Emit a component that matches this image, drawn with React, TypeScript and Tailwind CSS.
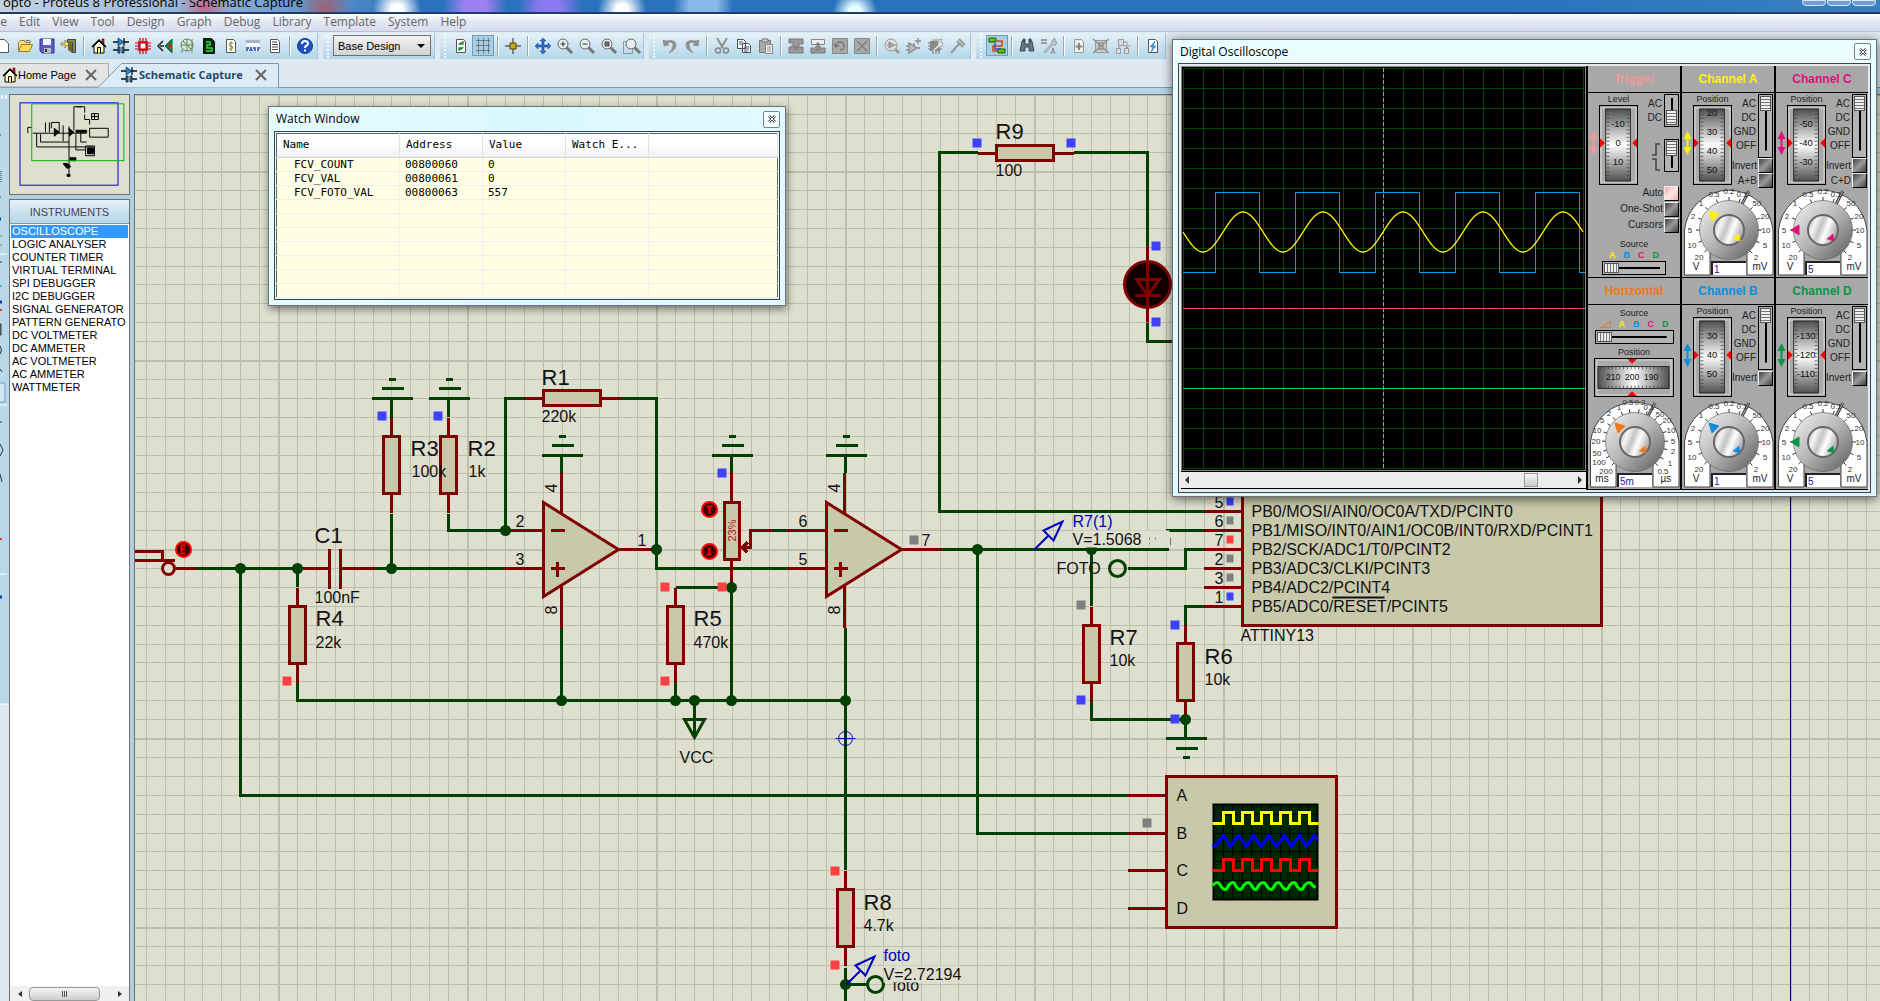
import { ReactNode } from 'react';
import clsx from 'clsx';

type Side = 'left' | 'up';

type DialLabel = [string, number, number];

type ChannelProps = {
    name: string;
    color: string;
    titleClass: string;
    position: [string, number][];
    volts: string;
    knob: Side;
    sum?: string;
};

const WIRE = '#004000';
const PART = '#800000';
const FILL = '#c8c8aa';
const BLUE = '#4040ff';
const RED = '#ff4040';
const GREY = '#808080';
const PROBE = '#0000c0';

const MENU = ['File', 'Edit', 'View', 'Tool', 'Design', 'Graph', 'Debug', 'Library', 'Template', 'System', 'Help'];

const INSTRUMENTS = [
    'OSCILLOSCOPE', 'LOGIC ANALYSER', 'COUNTER TIMER', 'VIRTUAL TERMINAL', 'SPI DEBUGGER', 'I2C DEBUGGER',
    'SIGNAL GENERATOR', 'PATTERN GENERATO', 'DC VOLTMETER', 'DC AMMETER', 'AC VOLTMETER', 'AC AMMETER', 'WATTMETER'
];

const WATCH_ROWS = [
    ['FCV_COUNT', '00800060', '0'],
    ['FCV_VAL', '00800061', '0'],
    ['FCV_FOTO_VAL', '00800063', '557'],
    [], [], [], [], [], [], []
];

const CHANNELS: Record<string, ChannelProps> = {
    A: { name: 'Channel A', color: '#fff200', titleClass: 'text-[#fff200]', position: [['20', 6], ['30', 26], ['40', 46], ['50', 66]], volts: '1', knob: 'up', sum: 'A+B' },
    B: { name: 'Channel B', color: '#0a8fe0', titleClass: 'text-[#0a8fe0]', position: [['30', 18], ['40', 38], ['50', 58]], volts: '1', knob: 'up' },
    C: { name: 'Channel C', color: '#e0107c', titleClass: 'text-[#e0107c]', position: [['-50', 18], ['-40', 38], ['-30', 58]], volts: '5', knob: 'left', sum: 'C+D' },
    D: { name: 'Channel D', color: '#0a9448', titleClass: 'text-[#0a9448]', position: [['-130', 18], ['-120', 38], ['-110', 58]], volts: '5', knob: 'left' }
};

const VOLT_LABELS: DialLabel[] = [
    ['0.5', 32, 9], ['0.2', 47, 6], ['0.1', 60, 9], ['1', 19, 18], ['2', 11, 31], ['5', 8, 45], ['10', 10, 60], ['20', 17, 72],
    ['50', 75, 18], ['20', 83, 31], ['10', 84, 45], ['5', 83, 60], ['2', 74, 72]
];

const TIME_LABELS: DialLabel[] = [
    ['0.5', 40, 5], ['0.2', 52, 5], ['1', 31, 10], ['2', 21, 16], ['5', 14, 23], ['10', 9, 33], ['20', 8, 44], ['50', 9, 56],
    ['100', 11, 65], ['200', 18, 74], ['0.1', 61, 10], ['50', 72, 17], ['20', 79, 23], ['10', 83, 33], ['5', 85, 44], ['2', 85, 54],
    ['1', 82, 66], ['0.5', 75, 74]
];

const lens = (
    <>
        <path d="M9 9l6 6" stroke="#777" strokeWidth="3" />
        <circle cx="6" cy="6" r="5" fill="#e8eef2" stroke="#666" />
    </>
);
const page = <path d="M3.5 1.5h7l2 2v11h-9z" fill="#fff" stroke="#555" />;
const greyPage = <path d="M3.5 1.5h7l2 2v11h-9z" fill="#eee" stroke="#999" />;

const ICONS: Record<string, ReactNode> = {
    new: <path d="M1.5 1.5h8l4 4v9h-12z" fill="#fff" stroke="#555" />,
    open: (
        <>
            <path d="M1.5 13.5v-9l2-2h4l1 2h4v2" fill="#f8e08a" stroke="#9a7a20" />
            <path d="M1.5 13.5l3-7h11l-3 7z" fill="#ffd95a" stroke="#9a7a20" />
            <path d="M9 3q3-2 5 1" fill="none" stroke="#555" />
        </>
    ),
    save: (
        <>
            <path d="M1 1h14v14H3l-2-2z" fill="#5a5ac8" stroke="#33337a" />
            <path d="M4 1h8v6H4z" fill="#f4f4ff" />
            <path d="M5 10h7v5H5z" fill="#bbb" />
            <path d="M6 11h2v3H6z" fill="#333" />
        </>
    ),
    exit: (
        <>
            <path d="M6.500 1.500h8v13h-3v-10h-5z" fill="#8a8a50" stroke="#444" />
            <path d="M7 3l4 3v9l-4-3z" fill="#6a6a38" />
            <path d="M0 5h4V2l4 4-4 4V7H0z" fill="#f4e838" stroke="#666" strokeWidth=".7" />
        </>
    ),
    home: (
        <>
            <path d="M11 1h2v5h-2z" fill="#f00" stroke="#000" strokeWidth=".5" />
            <path d="M3 8l5-5 5 5v7H3z" fill="#fffbd8" stroke="#000" />
            <path d="M1 9l7-7 7 7" fill="none" stroke="#000" strokeWidth="1.500" />
            <path d="M6.500 15V9.500h3V15" fill="#ffef60" stroke="#000" />
        </>
    ),
    schem: (
        <>
            <path d="M0 4h16M0 12h5m6 0h5M11 0v8" stroke="#111" strokeWidth="1.300" />
            <path d="M5 0l6 4-6 4z" fill="#1c86e0" stroke="#111" strokeWidth=".6" />
            <path d="M5 9h2v6H5zM9 9h2v6H9z" fill="#1c86e0" stroke="#111" strokeWidth=".8" />
        </>
    ),
    chip: (
        <>
            <path d="M5 0v16M8 0v16M11 0v16M0 5h16M0 8h16M0 11h16" stroke="#c00018" strokeWidth="1.200" />
            <path d="M3 3h10v10H3z" fill="#e81828" />
            <path d="M5 5h6v6H5z" fill="#fff" stroke="#900" />
        </>
    ),
    eye: (
        <>
            <path d="M15 1v14L8 8z" fill="#108040" stroke="#063" />
            <path d="M15 4v8l-4-4z" fill="#e02020" />
            <path d="M6 3L1 8l5 5M3 8h4" fill="none" stroke="#222" strokeWidth="1.500" />
        </>
    ),
    gerber: (
        <>
            <circle cx="8" cy="7" r="6" fill="#cfe6cf" stroke="#6a7a6a" />
            <path d="M2 7h12M8 1v12M4 3l8 8M13 1v14M3 12v3" stroke="#5a8a62" />
        </>
    ),
    layers: (
        <>
            <path d="M2.500 .5h8l3 3v12h-11z" fill="#082808" stroke="#111" />
            <path d="M5 4h4v3H6v3h5v3H5" fill="none" stroke="#28e048" strokeWidth="1.500" />
        </>
    ),
    bill: (
        <>
            {page}
            <path d="M10 5Q6 4 6 6.500T10 9q0 3-4 2M8 3v10" fill="none" stroke="#888820" />
        </>
    ),
    code: (
        <>
            <path d="M1 2h14v11H1z" fill="#fff" stroke="#ccc" strokeWidth=".5" />
            <path d="M1 2h14v3H1z" fill="#aab0cc" />
            <path d="M1 10h3m1 0h2m1 0h3m1 0h3M1 12h2m1 0h4m1 0h2m1 0h2" stroke="#2040c0" strokeWidth="1.500" />
        </>
    ),
    doc: (
        <>
            {page}
            <path d="M5 4h5M5 6.500h6M5 9h6M5 11.500h6" stroke="#444" />
        </>
    ),
    help: (
        <>
            <circle cx="8" cy="8" r="7.500" fill="#1c4fc0" stroke="#123a8c" />
            <path d="M5 6q0-3 3-3t3 2.500q0 1.500-2 2.500-1 .5-1 2M8 11.500v2" fill="none" stroke="#fff" strokeWidth="2" />
        </>
    ),
    redraw: (
        <>
            {page}
            <path d="M6 7q1-3 4-2M10 9q-1 3-4 2M10 3v3H7M6 13v-3h3" fill="none" stroke="#189030" strokeWidth="1.300" />
        </>
    ),
    dots: <path d="M1.500 2.500h14M1.500 7.500h14M1.500 12.500h14M3.500 .5v15M8.500 .5v15M13.500 .5v15" stroke="#333" strokeDasharray="1 1" />,
    origin: (
        <>
            <path d="M8 0v16M0 8h16" stroke="#222" />
            <path d="M5 5h6v6H5z" fill="#c8a818" stroke="#554400" />
        </>
    ),
    pan: <path d="M8 0l3 3H9v4h4V5l3 3-3 3V9H9v4h2l-3 3-3-3h2V9H3v2L0 8l3-3v2h4V3H5z" fill="#2f6fd0" stroke="#123a8c" strokeWidth=".5" />,
    zoomIn: <>{lens}<path d="M3.500 6h5M6 3.500v5" stroke="#333" /></>,
    zoomOut: <>{lens}<path d="M3.500 6h5" stroke="#333" /></>,
    zoomAll: <>{lens}<path d="M4 4h4v4H4z" fill="#777" stroke="#444" /></>,
    zoomArea: <><path d="M.5 3.500h9v12h-9z" fill="none" stroke="#555" strokeDasharray="1 1" /><g transform="translate(2 0)">{lens}</g></>,
    undo: <path d="M1 2l1 6 5-1-2-2q6-2 6 2t-4 8q8-4 7-9T4 3z" fill="#909090" stroke="#777" strokeWidth=".5" />,
    redo: <path d="M15 2l-1 6-5-1 2-2q-6-2-6 2t4 8q-8-4-7-9t10-3z" fill="#909090" stroke="#777" strokeWidth=".5" />,
    cut: (
        <>
            <path d="M3 0l6 10M13 0L7 10" stroke="#909090" strokeWidth="2" />
            <circle cx="4" cy="12.500" r="2.500" fill="none" stroke="#888" strokeWidth="1.500" />
            <circle cx="12" cy="12.500" r="2.500" fill="none" stroke="#888" strokeWidth="1.500" />
        </>
    ),
    copy: (
        <>
            <path d="M1.500 1.500h6l2 2v7h-8zM6.500 5.500h6l2 2v7h-8z" fill="#f4f8fa" stroke="#455260" />
            <path d="M3 4h4M3 6h3M8 9h5M8 11h5M8 13h4" stroke="#557" />
        </>
    ),
    paste: (
        <>
            <path d="M1.500 2.500h11v12h-11z" fill="#aaa" stroke="#777" />
            <path d="M4 1h6v3H4z" fill="#ccc" stroke="#777" />
            <path d="M7.500 6.500h7v9h-7z" fill="#eee" stroke="#888" />
            <path d="M9 9h4M9 11h4M9 13h4" stroke="#999" />
        </>
    ),
    blockCopy: <path d="M1 1h14v5h-4v3h4v6H1V9h3V7h2V5H1zM6 9h4l-2 3z" fill="#999" stroke="#777" />,
    blockMove: <><path d="M1.500 1.500h13v5h-13z" fill="#eee" stroke="#888" /><path d="M7 5h2v4h2l-3 3-3-3h2zM1 10h3l4 3 4-3h3v5H1z" fill="#999" stroke="#777" /></>,
    blockRotate: <><path d="M.5 .5h15v15H.5z" fill="#a8a8a8" stroke="#888" /><path d="M4 8a4 4 0 1 1 4 4M2 6l2 3 3-2" fill="none" stroke="#777" strokeWidth="1.500" /></>,
    blockDelete: <><path d="M.5 .5h15v15H.5z" fill="#a8a8a8" stroke="#888" /><path d="M3 3l10 10M13 3L3 13" stroke="#808080" strokeWidth="1.500" /></>,
    pick: <><path d="M9 9l6 6" stroke="#999" strokeWidth="3" /><circle cx="7" cy="7" r="6" fill="#ddd" stroke="#999" /><path d="M3 7h2m5 0h2M5 4l5 3-5 3z" fill="#aaa" stroke="#888" /></>,
    makeDev: <path d="M3 5l8 5-8 5zM0 8h3M0 12h3M11 10h3M12 0v6M9 3h6M8 8V5" fill="#bbb" stroke="#888" strokeWidth="1.300" />,
    packager: <><path d="M5 1v15M8 1v15M11 1v15M0 5h14M0 8h14M0 11h14" stroke="#777" /><path d="M2 3h10v10H2z" fill="#8a8a8a" /><path d="M4 13l6-6q-1-5 4-6l-1 3 2 1q0 4-4 4l-6 5z" fill="#e8e8e8" stroke="#888" strokeWidth=".6" /></>,
    decompose: <path d="M1 15l8-9M7 3l6 6M9 1l6 6" stroke="#999" strokeWidth="2.200" />,
    wire: (
        <>
            <path d="M8 3h5v5H4v5h5" fill="none" stroke="#e04010" strokeWidth="1.500" />
            <path d="M6 5v6h6" fill="none" stroke="#2060e0" strokeWidth="1.500" />
            <path d="M0 0h7v4H0zM9 11h7v4H9z" fill="#5cc018" stroke="#285808" />
        </>
    ),
    find: <path d="M3 3h3v3h4V3h3l2 10h-5V9H6v4H1zM4 1h2v2H4zM10 1h2v2h-2z" fill="#68747c" stroke="#2f3a42" strokeWidth=".8" />,
    props: <><path d="M0 2h6M0 5h6" stroke="#888" strokeWidth="1.300" /><path d="M3 14l8-9q-1-3 3-5v4h2q-1 4-4 3l-8 8z" fill="#ccc" stroke="#999" /><path d="M10 16l2-6 2 6M11 14h2" fill="none" stroke="#888" /></>,
    addSheet: <>{greyPage}<path d="M8 5v7M4.500 8.500h7" stroke="#888" strokeWidth="2" /></>,
    delSheet: <><path d="M2.500 2.500h11v12h-11z" fill="#ccc" stroke="#999" /><path d="M0 1l16 14M16 1L0 15M5 5h6M5 8h6M5 11h6" stroke="#909090" strokeWidth="1.300" /></>,
    zoomChild: <path d="M3.500 1.500h5v6h-5zM1.500 10.500h4v5h-4zM9.500 10.500h4v5h-4zM9 4h3v6M15 7l-3 3-3-3M4 8v2" fill="#ddd" stroke="#999" />,
    erc: <>{page}<path d="M10 3L5 9h3l-2 5 5-6H8z" fill="#38a0e8" stroke="#1068b0" strokeWidth=".5" /></>
};

const TOOL_GROUPS: string[][] = [
    ['redraw', 'dots*', '|', 'origin', '|', 'pan', 'zoomIn', 'zoomOut', 'zoomAll', 'zoomArea'],
    ['undo', 'redo', '|', 'cut', 'copy', 'paste', '|', 'blockCopy', 'blockMove', 'blockRotate', 'blockDelete', '|', 'pick', 'makeDev', 'packager', 'decompose'],
    ['wire*', '|', 'find', 'props', '|', 'addSheet', 'delSheet', 'zoomChild', '|', 'erc']
];

const Icon = ({ name }: { name: string }) => (
    <svg viewBox="0 0 16 16" className="size-4 shrink-0 overflow-visible" aria-hidden="true">{ICONS[name]}</svg>
);

const ToolItems = ({ items }: { items: string[] }) => (
    <>
        {items.map((item, i) => {
            if (item === '|') {
                return <span key={i} className="mx-[3px] h-5 w-[2px] border-l border-[#9aa6b0] bg-white" />;
            }
            const active = item.endsWith('*');
            const name = item.replace('*', '');
            return (
                <button
                    key={i}
                    type="button"
                    aria-label={name}
                    className={clsx('flex h-[21px] w-[22px] items-center justify-center border', active ? 'border-[#6a9fc0] bg-[#a9cde2]' : 'border-transparent')}
                >
                    <Icon name={name} />
                </button>
            );
        })}
    </>
);

const ToolGroup = ({ children, grip = true }: { children: ReactNode; grip?: boolean }) => (
    <div className="flex h-[26px] shrink-0 items-center border-r border-[#a3c6dc] bg-linear-to-b from-[#e6f1f8] to-[#b4d6e9] pr-px">
        {grip && <span className="mr-1 ml-1 h-6 border-l-2 border-dotted border-[#f4f8fb]" />}
        {children}
    </div>
);

const Header = () => (
    <header>
        <div className="flex h-3 items-start justify-between overflow-hidden bg-[#2a72be] bg-[radial-gradient(circle_at_205px_8px,#c06a8a_0,transparent_26px),radial-gradient(circle_at_325px_8px,#a06070_0,transparent_26px),radial-gradient(circle_at_397px_10px,#ffffff_6px,transparent_24px),radial-gradient(circle_at_475px_8px,#9a80f0_12px,transparent_32px),radial-gradient(circle_at_550px_8px,#8a78f0_12px,transparent_32px),radial-gradient(circle_at_622px_10px,#ffffff_6px,transparent_24px),radial-gradient(circle_at_703px_6px,#88b8e8_14px,transparent_30px),radial-gradient(circle_at_855px_12px,#e8ffff_6px,transparent_22px),linear-gradient(to_right,#c4d2e0_0,#8fb0d4_220px,transparent_420px,transparent_80%,#3a7fc0)] pl-[3px] text-black">
            <h1 className="-mt-2 text-[13px] leading-5 whitespace-nowrap">opto - Proteus 8 Professional - Schematic Capture</h1>
            <div className="flex h-[6px] gap-px pr-1">
                <button type="button" aria-label="Minimize" className="w-6 rounded-b border border-[#d8e8f8] bg-[#6f9fd0]" />
                <button type="button" aria-label="Maximize" className="w-6 rounded-b border border-[#d8e8f8] bg-[#6f9fd0]" />
                <button type="button" aria-label="Close program" className="w-6 rounded-b border border-[#d8e8f8] bg-[#6f9fd0]" />
            </div>
        </div>
        <nav className="h-5 border-t-2 border-b border-t-[#1d3c66] border-b-[#b9bdd6] bg-linear-to-b from-white via-[#e2e6f2] to-[#d8def0]">
            <div className="-ml-3 flex gap-3 text-xs leading-4 text-[#666]">
                {MENU.map((m) => <button key={m} type="button">{m}</button>)}
            </div>
        </nav>
        <div className="flex h-[27px] items-center gap-[5px] overflow-hidden bg-[#dfe9f1]">
            <div className="-ml-2">
                <ToolGroup grip={false}>
                    <ToolItems items={['new', 'open', 'save', 'exit', '|', 'home', 'schem', 'chip', 'eye', 'gerber', 'layers', 'bill', 'code', 'doc', '|', 'help']} />
                </ToolGroup>
            </div>
            <ToolGroup>
                <select
                    aria-label="Design variant"
                    className="mr-[2px] h-[21px] w-[98px] appearance-none border border-[#707070] bg-linear-to-b from-[#f3f3f3] to-[#d2d2d2] bg-no-repeat pl-1 font-['Liberation_Sans',Arial,sans-serif] text-[11px] leading-4 text-black"
                >
                    <option>Base Design</option>
                </select>
                <svg viewBox="0 0 8 4" className="pointer-events-none mr-2 -ml-4 h-1 w-2"><path d="M0 0h8L4 4z" fill="#000" /></svg>
            </ToolGroup>
            {TOOL_GROUPS.map((g, i) => <ToolGroup key={i}><ToolItems items={g} /></ToolGroup>)}
        </div>
        <div className="flex h-[29px] items-end border-b border-[#6f9fbd] bg-[#e1e9f0]">
            <div className="relative flex h-[24px] items-center gap-1 pl-[2px] text-xs">
                <svg className="absolute inset-0" width="290" height="25" viewBox="0 0 290 25" aria-hidden="true">
                    <path d="M0 .5H108.500V24H0" fill="#e4e4e4" stroke="#aaa" />
                    <path d="M98 24.500L121.500 .5H278.500V24.500" fill="#dcebf5" stroke="#6f9fbd" />
                </svg>
                <button type="button" className="relative flex w-[95px] items-center">
                    <Icon name="home" />
                    <span className="flex-1 text-left font-['Liberation_Sans',Arial,sans-serif] text-[11px] whitespace-nowrap">Home Page</span>
                    <svg viewBox="0 0 12 12" className="size-3"><path d="M1 1l10 10M11 1L1 11" stroke="#666" strokeWidth="2" /></svg>
                </button>
                <button type="button" className="relative ml-5 flex w-[146px] items-center gap-[2px] font-bold text-[#24486a]">
                    <Icon name="schem" />
                    <span className="flex-1 text-left text-[11px] whitespace-nowrap">Schematic Capture</span>
                    <svg viewBox="0 0 12 12" className="size-3"><path d="M1 1l10 10M11 1L1 11" stroke="#666" strokeWidth="2" /></svg>
                </button>
            </div>
        </div>
        <div className="h-[6px] bg-[#b3d5e8]" />
    </header>
);

const Overview = () => (
    <svg className="h-[101px] w-[121px] border border-[#707070] bg-[#dfdfcf]" viewBox="0 0 121 101" aria-label="Sheet overview">
        <rect x="10" y="8" width="100" height="84" fill="none" stroke="#0000c8" />
        <g fill="none" stroke="#000">
            <path d="M65 36V12h11v6m-8-6h5M76 20v5h5v5" />
            <path d="M27 39v14h58M31 40v8h29v-6M23 39h55M18 33v6m0-6h4M36 28v10M40 28v10M42 34v-6h8v10M54 31v16M60 32v4M67 40v16h10M72 38v10h6M60 48v34" />
            <path d="M45 34l5 4-5 4zM60 34l5 4-5 4z" fill="#000" />
            <path d="M81 34h19v9H81zM77 52h9v10h-9zM83 19h7v6h-7zM83 22h7M86 19v6" />
            <path d="M79 54h6v6h-6zM61 64h6v3h-6zM67 36h11v2H67zM54 70h4l4 3-4 2zM58 81h3v2h-3z" fill="#000" />
        </g>
        <rect x="22" y="9" width="94" height="58" fill="none" stroke="#00b800" />
    </svg>
);

const LeftStrip = () => (
    <svg className="w-[9px] shrink-0 bg-[#b9d8ea]" height="907" viewBox="0 0 9 907" aria-hidden="true">
        <path d="M0 610h9v297H0z" fill="#dde8f0" />
        <path d="M1 3h2M5 3h2" stroke="#fff" strokeWidth="3" />
        <path d="M0 160h7M0 311h7M0 480h7M0 610h7" stroke="#fff" />
        <path d="M0 41h1M0 103h1M0 168h2M0 328h2" stroke="#444" />
        <path d="M1 77v12" stroke="#333" strokeDasharray="1 1" />
        <path d="M0 125h1M0 208h2M0 503h2" stroke="#0044a0" strokeWidth="3" />
        <path d="M0 192h2" stroke="#088" />
        <path d="M0 142h2M0 151h2" stroke="#884" />
        <path d="M0 216h2M0 445h2" stroke="#e04010" strokeWidth="2" />
        <path d="M0 230h1v11h-1zM0 252q3 4 0 8M0 275l2 3M0 350l3 6-3 6M0 380l2 8" fill="none" stroke="#333" />
        <path d="M0 289h5v19H0" fill="#d4e8f3" stroke="#6a9fc0" />
    </svg>
);

const Sidebar = () => (
    <aside className="flex w-[134px] shrink-0 bg-[#b0d0e2]">
        <LeftStrip />
        <div className="flex w-[121px] flex-col gap-1">
            <Overview />
            <section className="flex min-h-0 flex-1 flex-col border border-b-0 border-[#707070] bg-white">
                <h2 className="h-6 border-b border-[#8a949c] bg-linear-to-b from-[#e6f1f8] to-[#b4d6e9] text-center text-[11px] leading-6 text-[#445]">INSTRUMENTS</h2>
                <ul className="flex-1 overflow-hidden px-px pt-px text-[11px] leading-[13px] text-black">
                    {INSTRUMENTS.map((name, i) => (
                        <li key={name}>
                            <button type="button" className={clsx('block w-full pl-px text-left whitespace-nowrap', i === 0 && 'bg-[#3399ff] text-white')}>{name}</button>
                        </li>
                    ))}
                </ul>
                <div className="flex h-[15px] items-center bg-[#f0f0f0]">
                    <button type="button" aria-label="Scroll left" className="flex w-[19px] justify-center"><svg viewBox="0 0 4 6" className="h-[6px] w-1"><path d="M4 0v6L0 3z" fill="#333" /></svg></button>
                    <div className="flex h-[14px] w-[71px] items-center justify-center gap-px rounded-sm border border-[#999] bg-linear-to-b from-[#f4f4f4] to-[#cfcfd2]">
                        {[0, 1, 2].map((n) => <span key={n} className="h-[6px] w-px bg-[#555]" />)}
                    </div>
                    <button type="button" aria-label="Scroll right" className="ml-auto flex w-[19px] justify-center"><svg viewBox="0 0 4 6" className="h-[6px] w-1"><path d="M0 0v6l4-3z" fill="#333" /></svg></button>
                </div>
            </section>
        </div>
    </aside>
);

// ---- schematic symbols, all in sheet pixels ----

const Node = ({ x, y }: { x: number; y: number }) => <circle cx={x} cy={y} r="5.500" fill={WIRE} />;

const State = ({ x, y, c }: { x: number; y: number; c: string }) => <rect x={x - 5} y={y - 5} width="9" height="9" fill={c} />;

const Label = ({ x, y, children, big, color }: { x: number; y: number; children: ReactNode; big?: boolean; color?: string }) => (
    <text x={x} y={y} fill={color || '#111'} className={big ? 'text-[22px]' : 'text-[16px]'}>{children}</text>
);

// y is the top of the body, the leads stick out by 19
const Resistor = ({ x, y }: { x: number; y: number }) => (
    <g stroke={PART} strokeWidth="3" shapeRendering="crispEdges">
        <path d={`M${x} ${y - 19}v95`} />
        <rect x={x - 8} y={y} width="16" height="57" fill={FILL} />
    </g>
);

const ResistorH = ({ x, y }: { x: number; y: number }) => (
    <g stroke={PART} strokeWidth="3" shapeRendering="crispEdges">
        <path d={`M${x - 19} ${y}h96`} />
        <rect x={x} y={y - 8} width="57" height="15" fill={FILL} />
    </g>
);

const Ground = ({ x, y, down }: { x: number; y: number; down?: boolean }) => {
    const d = down ? 1 : -1;
    return <path d={`M${x - 20} ${y}h41M${x - 10} ${y + 10 * d}h22M${x - 3} ${y + 19 * d}h7`} stroke={WIRE} strokeWidth="3" shapeRendering="crispEdges" />;
};

const OpAmp = ({ x }: { x: number }) => (
    <g stroke={PART} strokeWidth="3">
        <path d={`M${x + 18} 472v116M${x + 18} 580v47M${x - 40} 530h40M${x - 40} 568h40M${x + 75} 549h36`} shapeRendering="crispEdges" />
        <path d={`M${x} 502v94l75-47z`} fill={FILL} />
        <path d={`M${x + 7} 530h14M${x + 7} 568h14M${x + 14} 561v15`} shapeRendering="crispEdges" />
        <g stroke="none" fill="#111" className="text-[16px]">
            <text transform={`translate(${x + 13} 492) rotate(-90)`}>4</text>
            <text transform={`translate(${x + 13} 614) rotate(-90)`}>8</text>
        </g>
    </g>
);

const RoundButton = ({ x, y, d }: { x: number; y: number; d: string }) => (
    <g>
        <circle cx={x} cy={y} r="7.500" fill="#400000" stroke="#f00" strokeWidth="2" />
        <path transform={`translate(${x} ${y})`} d={d} fill="none" stroke="#f00" strokeWidth="2" />
    </g>
);

const Probe = ({ x, y }: { x: number; y: number }) => (
    <path d={`M${x} ${y}l14 -14M${x + 9} ${y - 19}l19 -9l-9 19z`} fill="none" stroke={PROBE} strokeWidth="2" />
);

const gridPath = (start: number, from: number, to: number, step: number, vertical: boolean) => {
    let d = '';
    for (let k = from; k <= to; k += step) {
        const p = Math.round(start + 18.9 * k);
        d += vertical ? `M${p} 90V1400` : `M130 ${p}H2800`;
    }
    return d;
};

const squareWave = (x: number, low: number, high: number) => {
    let d = `M${x} ${low}`;
    for (let i = 0; i < 5; i++) d += `h${i ? 9 : 11}V${high}h10V${low}`;
    return d + 'h9';
};

const PINS: [string, string, string][] = [
    ['5', 'PB0/MOSI/AIN0/OC0A/TXD/PCINT0', BLUE],
    ['6', 'PB1/MISO/INT0/AIN1/OC0B/INT0/RXD/PCINT1', GREY],
    ['7', 'PB2/SCK/ADC1/T0/PCINT2', RED],
    ['2', 'PB3/ADC3/CLKI/PCINT3', GREY],
    ['3', 'PB4/ADC2/PCINT4', GREY],
    ['1', 'PB5/ADC0/RESET/PCINT5', BLUE]
];

const Schematic = () => (
    <main className="min-w-0 flex-1 overflow-hidden border-t border-l border-[#707070] bg-[#dfdfcf]">
        <svg className="h-full w-full" aria-label="Schematic sheet">
            <g transform="translate(-134.500 -94.500)" fontFamily="Liberation Sans, Arial, sans-serif">
                <g stroke="#bebead" shapeRendering="crispEdges">
                    <path d={gridPath(278, -7, 130, 1, true)} />
                    <path d={gridPath(171, -4, 65, 1, false)} />
                    <path d={gridPath(278, 0, 130, 10, true)} strokeWidth="2" />
                    <path d={gridPath(171, 0, 65, 10, false)} strokeWidth="2" />
                </g>
                <path d="M1790 90V1400" stroke="#000060" shapeRendering="crispEdges" />

                <g fill="none" stroke={WIRE} strokeWidth="3" shapeRendering="crispEdges">
                    <path d="M195 568H303M374 568H503M240 568V795H1127" />
                    <path d="M297 568V586M297 682V700H845M391 398V419M391 513V568M448 398V416M448 513V530H505M524 398H505V530" />
                    <path d="M620 398H656V568H787M561 455V472M561 627V700M731 455V472M845 455V472M845 627V869M845 967V1400" />
                    <path d="M675 587H731V700M675 682V700M694 700V719M771 530H787M939 549H1168M977 549V833H1127" />
                    <path d="M977 152H939V511H1203M1073 152H1147V246M1147 322V341H1200" />
                    <path d="M1091 549V605M1091 701V719H1185V737M1165 530H1203M1203 549H1185V568H1127M1203 606H1185V624M845 984H866" />
                </g>

                <Ground x={391} y={398} />
                <Ground x={448} y={398} />
                <Ground x={561} y={455} />
                <Ground x={731} y={455} />
                <Ground x={845} y={455} />
                <Ground x={1185} y={738} down />

                <g fill="none" stroke={PART} strokeWidth="3" shapeRendering="crispEdges">
                    <path d="M134 551H162V560M134 560H174M175 568H195M303 568H329M341 568H374M329 548V588M340 548V588" />
                    <path d="M771 530H750V547H743M747 542L742 547L747 552" />
                    <path d="M941 549H903" />
                </g>
                <circle cx="168" cy="568" r="6" fill="#dfdfcf" stroke={PART} strokeWidth="3" />

                <Resistor x={391} y={436} />
                <Resistor x={448} y={436} />
                <Resistor x={297} y={606} />
                <Resistor x={675} y={606} />
                <Resistor x={1091} y={625} />
                <Resistor x={1185} y={643} />
                <Resistor x={845} y={889} />
                <ResistorH x={543} y={398} />
                <ResistorH x={996} y={153} />
                <g stroke={PART} strokeWidth="3" shapeRendering="crispEdges">
                    <path d="M731 472V587" />
                    <rect x="724" y="502" width="15" height="57" fill={FILL} />
                </g>
                <text transform="translate(735 541) rotate(-90)" fill="#c01010" className="text-[11px]">23%</text>

                <OpAmp x={543} />
                <OpAmp x={826} />

                <RoundButton x={183} y={549} d="M2 -4h-4v8h4M-2 0h3" />
                <RoundButton x={709} y={509} d="M0 4v-7M-3 -3h6" />
                <RoundButton x={709} y={551} d="M0 -4v7M-3 3h5" />

                <g stroke={PART} strokeWidth="3">
                    <path d="M1147 246V322" />
                    <circle cx="1147" cy="284" r="23" fill="#100000" />
                    <path d="M1147 261V307M1136 279H1159L1147 295ZM1135 295H1160" fill="none" />
                </g>

                {[[240, 568], [297, 568], [391, 568], [505, 530], [561, 700], [656, 549], [731, 587], [675, 700], [694, 700], [731, 700], [845, 700], [977, 549], [1091, 549], [1185, 719], [845, 984]].map(([x, y]) => (
                    <Node key={`${x}-${y}`} x={x} y={y} />
                ))}

                <path d="M694 700V736M684 719H704L694 737Z" fill="none" stroke={WIRE} strokeWidth="3" />
                <g fill="none" stroke={WIRE} strokeWidth="3">
                    <circle cx="1117" cy="568" r="8" />
                    <circle cx="875" cy="984" r="8" />
                </g>
                <g fill="none" stroke={PROBE}>
                    <circle cx="845" cy="738" r="7" />
                    <path d="M835 738H855M845 728V748" />
                </g>

                {[[382, 416], [438, 416], [722, 473], [977, 143], [1071, 143], [1156, 246], [1156, 322], [1081, 700], [1175, 625], [1175, 719]].map(([x, y]) => (
                    <State key={`${x}-${y}`} x={x} y={y} c={BLUE} />
                ))}
                {[[287, 681], [665, 587], [722, 587], [665, 681], [835, 871], [835, 965]].map(([x, y]) => (
                    <State key={`${x}-${y}`} x={x} y={y} c={RED} />
                ))}
                {[[914, 540], [1081, 605], [1147, 823]].map(([x, y]) => (
                    <State key={`${x}-${y}`} x={x} y={y} c={GREY} />
                ))}

                <Label x={541} y={384} big>R1</Label>
                <Label x={541} y={421}>220k</Label>
                <Label x={410} y={455} big>R3</Label>
                <Label x={411} y={476}>100k</Label>
                <Label x={467} y={455} big>R2</Label>
                <Label x={468} y={476}>1k</Label>
                <Label x={314} y={542} big>C1</Label>
                <Label x={314} y={602}>100nF</Label>
                <Label x={315} y={625} big>R4</Label>
                <Label x={315} y={647}>22k</Label>
                <Label x={693} y={625} big>R5</Label>
                <Label x={693} y={647}>470k</Label>
                <Label x={1109} y={644} big>R7</Label>
                <Label x={1109} y={665}>10k</Label>
                <Label x={1204} y={663} big>R6</Label>
                <Label x={1204} y={684}>10k</Label>
                <Label x={863} y={909} big>R8</Label>
                <Label x={863} y={930}>4.7k</Label>
                <Label x={995} y={138} big>R9</Label>
                <Label x={995} y={175}>100</Label>
                <Label x={679} y={762}>VCC</Label>
                <Label x={515} y={526}>2</Label>
                <Label x={515} y={564}>3</Label>
                <Label x={637} y={545}>1</Label>
                <Label x={798} y={526}>6</Label>
                <Label x={798} y={564}>5</Label>
                <Label x={921} y={545}>7</Label>
                <Label x={1056} y={573}>FOTO</Label>

                <Probe x={1034} y={549} />
                <Label x={1072} y={526} color={PROBE}>R7(1)</Label>
                <rect x="1072" y="530" width="97" height="17" fill="#dfdfcf" />
                <Label x={1072} y={544}>V=1.5068</Label>
                <path d="M1149 537v2M1149 542v2M1155 537v2M1170 537v8" stroke="#777" />

                <Label x={892} y={990}>foto</Label>
                <rect x="883" y="965" width="76" height="17" fill="#dfdfcf" />
                <Probe x={846} y={984} />
                <Label x={883} y={960} color={PROBE}>foto</Label>
                <Label x={883} y={979}>V=2.72194</Label>

                <rect x="1242" y="493" width="359" height="132" fill={FILL} stroke={PART} strokeWidth="3" />
                {PINS.map(([num, name, c], i) => {
                    const y = 511 + i * 19;
                    return (
                        <g key={num}>
                            <path d={`M1203 ${y}h39`} stroke={PART} strokeWidth="3" shapeRendering="crispEdges" />
                            <Label x={1214} y={y - 4}>{num}</Label>
                            <rect x="1226" y={y - 14} width="7" height="8" fill={c} />
                            <Label x={1251} y={y + 5}>{name}</Label>
                        </g>
                    );
                })}
                <path d="M1332 597H1384" stroke="#111" strokeWidth="2" />
                <Label x={1240} y={640}>ATTINY13</Label>

                <rect x="1166" y="776" width="170" height="151" fill={FILL} stroke={PART} strokeWidth="3" />
                {['A', 'B', 'C', 'D'].map((n, i) => (
                    <g key={n}>
                        <path d={`M1127 ${[795, 833, 870, 908][i]}h39`} stroke={PART} strokeWidth="3" shapeRendering="crispEdges" />
                        <Label x={1176} y={[800, 838, 875, 913][i]}>{n}</Label>
                    </g>
                ))}
                <rect x="1213" y="804" width="104" height="95" fill="#002800" stroke="#000" strokeWidth="2" />
                <path d="M1223 804v95M1232 804v95M1242 804v95M1251 804v95M1261 804v95M1270 804v95M1280 804v95M1289 804v95M1299 804v95M1308 804v95M1213 814h104M1213 833h104M1213 851h104M1213 861h104M1213 880h104" stroke="#000" />
                <g fill="none" strokeWidth="3">
                    <path d={squareWave(1212, 823, 812)} stroke="#ff0" />
                    <path d="M1212 844l3 2l8-11l7 11l8-11l8 11l7-11l8 11l7-11l8 11l8-11l7 11l8-11l7 11l8-11l3 5" stroke="#00f" />
                    <path d={squareWave(1212, 870, 859)} stroke="#f00" />
                    <path d="M1212 885q5-6 8 0q5 8 8 0q5-6 7 0q5 8 8 0q5-6 8 0q4 8 7 0q5-6 8 0q5 8 8 0q4-6 7 0q5 8 8 0q5-6 7 0q5 8 8 0q5-6 8 0l3 2" stroke="#0f0" />
                </g>
            </g>
        </svg>
    </main>
);

const CloseButton = () => (
    <button type="button" aria-label="Close" className="flex size-[17px] items-center justify-center rounded-xs border border-[#7a8488] bg-[#effdff]">
        <svg viewBox="0 0 8 8" className="size-2"><path d="M1 1l6 6M7 1L1 7" stroke="#555" strokeWidth="2.500" /><path d="M1 1l6 6M7 1L1 7" stroke="#fff" /></svg>
    </button>
);

const WatchWindow = () => (
    <section className="absolute top-[106px] left-[268px] w-[518px] border border-[#6b7579] bg-linear-to-r from-[#e6fcff] via-[#dbf8ff] to-[#e2faff] px-[5px] pb-[5px] shadow-[1px_3px_8px_rgba(0,0,0,0.5)]">
        <div className="flex h-[24px] items-center justify-between pl-[2px] text-xs text-black">
            <h2>Watch Window</h2>
            <CloseButton />
        </div>
        <div className="border border-[#3d4448] p-px">
            <table className="w-full table-fixed border-collapse border border-[#666] bg-[#ffffe3] text-left font-['DejaVu_Sans_Mono',monospace] text-[11px] text-black">
                <colgroup>
                    <col className="w-[123px]" />
                    <col className="w-[83px]" />
                    <col className="w-[83px]" />
                    <col className="w-[83px]" />
                    <col />
                </colgroup>
                <thead>
                    <tr className="h-6 border-b border-[#d0d0d8] bg-linear-to-b from-white from-45% to-[#eef0f3]">
                        {['Name', 'Address', 'Value', 'Watch E...', ''].map((h, i) => (
                            <th key={i} className="border-r border-[#e0e2e6] p-0 pl-[6px] font-normal whitespace-nowrap">{h}</th>
                        ))}
                    </tr>
                </thead>
                <tbody>
                    {WATCH_ROWS.map(([name, address, value], i) => (
                        <tr key={i} className="h-[14px] border-b border-[#eeeef4] leading-[13px]">
                            <td className="border-r border-[#eeeef4] p-0 pl-[17px]">{name}</td>
                            <td className="border-r border-[#eeeef4] p-0 pl-[5px]">{address}</td>
                            <td className="border-r border-[#eeeef4] p-0 pl-[5px]">{value}</td>
                            <td className="border-r border-[#eeeef4] p-0" />
                            <td className="p-0" />
                        </tr>
                    ))}
                </tbody>
            </table>
        </div>
    </section>
);

const sinePath = () => {
    let d = '';
    for (let x = 1; x <= 402; x += 2) {
        const y = 165 - 20 * Math.cos(((x - 61) * Math.PI) / 40);
        d += `${d ? 'L' : 'M'}${x} ${y.toFixed(1)}`;
    }
    return d;
};

const lines = Array.from({ length: 21 }, (_, i) => 1 + i * 20);

const Screen = () => (
    <svg className="block h-[405px] w-[405px] border border-[#888] bg-black" viewBox="0 0 403 403" aria-label="Oscilloscope traces">
        <g transform="translate(.5 .5)" fill="none" shapeRendering="crispEdges">
            <path d={lines.map((p) => `M${p} 1V401M1 ${p}H401`).join('')} stroke="#004800" />
            <path d="M201 0V402" stroke="#a0a0a0" strokeDasharray="4 2" />
            <path d="M0 241H402" stroke="#e84870" />
            <path d="M0 321H402" stroke="#00d850" />
            <path d="M0 205H33V125H77V205H113V125H157V205H193V125H237V205H273V125H317V205H353V125H397V205H402" stroke="#0a9cec" />
        </g>
        <path d={sinePath()} fill="none" stroke="#fff800" strokeWidth="1.300" />
    </svg>
);

const Wheel = ({ labels }: { labels: [string, number][] }) => (
    <svg className="block h-20 w-[39px] border border-black" viewBox="0 0 39 80" aria-hidden="true">
        <defs>
            <linearGradient id="wheelV" x1="0" x2="0" y1="0" y2="1">
                <stop offset="0" stopColor="#505050" />
                <stop offset=".5" stopColor="#fff" />
                <stop offset="1" stopColor="#505050" />
            </linearGradient>
        </defs>
        <rect x="1" y="1" width="37" height="78" fill="#aaa" stroke="#ddd" />
        <rect x="6" y="2" width="26" height="76" fill="url(#wheelV)" stroke="#222" />
        <path d={Array.from({ length: 18 }, (_, i) => `M7 ${4 + i * 4}h3M28 ${4 + i * 4}h3`).join('')} stroke="#444" strokeWidth=".8" />
        {labels.map(([t, y]) => <text key={t} x="19" y={y + 3} textAnchor="middle" className="text-[10px]" fill="#111">{t}</text>)}
        <path d="M0 33l5 5-5 5zM39 33l-5 5 5 5z" fill="#f00" />
    </svg>
);

const WheelH = () => (
    <svg className="mx-auto block h-[39px] w-20 border border-black" viewBox="0 0 80 39" aria-hidden="true">
        <defs>
            <linearGradient id="wheelH">
                <stop offset="0" stopColor="#505050" />
                <stop offset=".5" stopColor="#fff" />
                <stop offset="1" stopColor="#505050" />
            </linearGradient>
        </defs>
        <rect x="1" y="1" width="78" height="37" fill="#aaa" stroke="#ddd" />
        <rect x="2" y="8" width="75" height="23" fill="url(#wheelH)" stroke="#222" />
        <path d={Array.from({ length: 18 }, (_, i) => `M${5 + i * 4} 8v3M${5 + i * 4} 28v3`).join('')} stroke="#444" strokeWidth=".8" />
        <g className="text-[9px]" textAnchor="middle" fill="#111">
            <text x="18" y="22">210</text>
            <text x="38" y="22">200</text>
            <text x="58" y="22">190</text>
        </g>
        <path d="M33 0h10l-5 5zM33 39h10l-5-5z" fill="#f00" />
    </svg>
);

const MARKERS = {
    left: 'M15 45l8-5v10z',
    up: 'M27 26l10 3-7 7z'
};

const Dial = ({ label, labels, units, color, knob, value }: { label: string; labels: DialLabel[]; units: [string, string]; color: string; knob: Side; value: string }) => (
    <div className="relative mt-auto pb-px">
        <svg className="block h-[91px] w-full" viewBox="0 0 92 91" aria-hidden="true">
            <defs>
                <linearGradient id="knobOut" x1="0" y1="0" x2="1" y2="1">
                    <stop offset="0" stopColor="#f4f4f4" />
                    <stop offset=".5" stopColor="#b4b4b4" />
                    <stop offset="1" stopColor="#585858" />
                </linearGradient>
                <linearGradient id="knobIn" x1="0" y1="0" x2="1" y2=".4">
                    <stop offset="0" stopColor="#b0b0b0" />
                    <stop offset=".3" stopColor="#f4f4f4" />
                    <stop offset=".5" stopColor="#c4c4c4" />
                    <stop offset=".7" stopColor="#fff" />
                    <stop offset="1" stopColor="#b0b0b0" />
                </linearGradient>
            </defs>
            <path d="M2.500 90V45A44.500 44.500 0 0 1 91 45V90H65V66H28V90Z" fill="#fff" stroke="#444" />
            <path d="M67 6L59 21" stroke="#444" strokeWidth="3" />
            <path d="M67 6L59 21" stroke="#aaa" />
            {labels.map(([t, x, y], i) => {
                const a = Math.atan2(y - 45, x - 47);
                return (
                    <g key={i}>
                        <path d={`M${47 + 29 * Math.cos(a)} ${45 + 29 * Math.sin(a)}L${47 + 33 * Math.cos(a)} ${45 + 33 * Math.sin(a)}`} stroke="#333" />
                        <text x={x} y={y + 3} textAnchor="middle" fill="#333" className="text-[8px]">{t}</text>
                    </g>
                );
            })}
            <text x="14" y="85" textAnchor="middle" fill="#222" className="text-[10px]">{units[0]}</text>
            <text x="78" y="85" textAnchor="middle" fill="#222" className="text-[10px]">{units[1]}</text>
            <circle cx="47" cy="45" r="29.500" fill="url(#knobOut)" stroke="#666" strokeWidth=".7" />
            <circle cx="47" cy="45" r="15" fill="url(#knobIn)" stroke="#666" strokeWidth="2" />
            <path d={MARKERS[knob]} fill={color} stroke={color} strokeLinejoin="round" />
            <path d="M51 54l6-5 1 7z" fill={color} stroke={color} strokeLinejoin="round" strokeWidth=".6" />
        </svg>
        <input
            aria-label={label}
            defaultValue={value}
            className="absolute bottom-[2px] left-[29px] h-[14px] w-[35px] border-t-2 border-l-2 border-[#222] bg-white pl-px text-[10px] leading-3 text-[#2020a0]"
        />
    </div>
);

const VSlider = ({ label, max, value, tall }: { label: string; max: number; value: number; tall?: boolean }) => (
    <input
        type="range"
        aria-label={label}
        min={0}
        max={max}
        defaultValue={value}
        className={clsx(
            'm-0 w-[15px] appearance-none border border-black bg-[#b4b4b4] bg-linear-to-b from-black to-black bg-[length:2px_80%] bg-center bg-no-repeat p-px [writing-mode:vertical-lr] [&::-webkit-slider-thumb]:h-[15px] [&::-webkit-slider-thumb]:w-[11px] [&::-webkit-slider-thumb]:appearance-none [&::-webkit-slider-thumb]:border [&::-webkit-slider-thumb]:border-[#555] [&::-webkit-slider-thumb]:bg-[repeating-linear-gradient(#eee_0_2px,#777_2px_3px)]',
            tall ? 'h-16' : 'h-[33px]'
        )}
    />
);

const HSlider = ({ label, wide }: { label: string; wide?: boolean }) => (
    <input
        type="range"
        aria-label={label}
        min={0}
        max={3}
        defaultValue={0}
        className={clsx(
            'mx-auto block h-[14px] appearance-none border border-black bg-[#b4b4b4] bg-linear-to-b from-black to-black bg-[length:84%_2px] bg-center bg-no-repeat p-px [&::-webkit-slider-thumb]:h-[10px] [&::-webkit-slider-thumb]:w-[15px] [&::-webkit-slider-thumb]:appearance-none [&::-webkit-slider-thumb]:border [&::-webkit-slider-thumb]:border-[#555] [&::-webkit-slider-thumb]:bg-[repeating-linear-gradient(to_right,#eee_0_2px,#777_2px_3px)]',
            wide ? 'w-[79px]' : 'w-16'
        )}
    />
);

const Toggle = ({ text, type = 'checkbox', group, on }: { text: string; type?: 'checkbox' | 'radio'; group?: string; on?: boolean }) => (
    <label className="flex h-4 items-center justify-end gap-px text-[10px] whitespace-nowrap">
        {text}
        <input
            type={type}
            name={group}
            defaultChecked={on}
            className="size-[15px] shrink-0 appearance-none border border-t-[#eee] border-r-black border-b-black border-l-[#eee] bg-linear-to-br from-[#444] via-[#999] to-[#444] checked:from-[#f0a8a8] checked:via-[#ffe8e8] checked:to-[#f0b0b0]"
        />
    </label>
);

const UpDown = ({ color }: { color: string }) => (
    <svg viewBox="0 0 9 24" className="mx-px mt-[38px] h-6 w-[9px]" aria-hidden="true">
        <path d="M4.500 0l4 8H5.500v8h3l-4 8-4-8h3V8H.5z" fill={color} />
    </svg>
);

const Panel = ({ title, titleClass, children }: { title: string; titleClass: string; children: ReactNode }) => (
    <section className="flex h-[212px] w-[94px] flex-col border-b border-l-2 border-black bg-[#a8a8a8] text-[9px] leading-[12px] text-[#222]">
        <h3 className={clsx('h-[27px] border-b border-black text-center text-[12px] leading-[27px] font-bold whitespace-nowrap', titleClass)}>{title}</h3>
        <div className="flex min-h-0 flex-1 flex-col">{children}</div>
    </section>
);

const Channel = ({ name, color, titleClass, position, volts, knob, sum }: ChannelProps) => (
    <Panel title={name} titleClass={titleClass}>
        <div className="flex h-[92px] pr-px">
            <UpDown color={color} />
            <div className="w-[39px] text-center">
                Position
                <Wheel labels={position} />
            </div>
            <div className="flex min-w-0 flex-1 flex-col pt-px">
                <div className="flex justify-end gap-[2px]">
                    <ul className="pt-[3px] text-right text-[10px] leading-[14px]">
                        {['AC', 'DC', 'GND', 'OFF'].map((m) => <li key={m}>{m}</li>)}
                    </ul>
                    <VSlider label={`${name} coupling`} max={3} value={0} tall />
                </div>
                <Toggle text="Invert" />
                {sum && <Toggle text={sum} />}
            </div>
        </div>
        <Dial label={`${name} volts per division`} labels={VOLT_LABELS} units={['V', 'mV']} color={color} knob={knob} value={volts} />
    </Panel>
);

const SourceLetters = ({ ramp }: { ramp?: boolean }) => (
    <div className="flex h-[11px] items-center justify-center gap-2 text-[9px] leading-[11px] font-bold">
        {ramp && <svg viewBox="0 0 11 7" className="h-[7px] w-[11px]"><path d="M0 6.500h10.500V.5L1 6.500" fill="none" stroke="#f07818" /></svg>}
        <span className="text-[#fff200]">A</span>
        <span className="text-[#0a8fe0]">B</span>
        <span className="text-[#e0107c]">C</span>
        <span className="text-[#0a9448]">D</span>
    </div>
);

const Trigger = () => (
    <Panel title="Trigger" titleClass="text-[#f09a9a]">
        <div className="flex h-[92px] pr-px">
            <UpDown color="#f09a9a" />
            <div className="w-[39px] text-center">
                Level
                <Wheel labels={[['-10', 18], ['0', 38], ['10', 58]]} />
            </div>
            <div className="flex flex-1 flex-col gap-3 pt-px">
                <div className="flex justify-end gap-[2px]">
                    <ul className="pt-[3px] text-right text-[10px] leading-[14px]">
                        <li>AC</li>
                        <li>DC</li>
                    </ul>
                    <VSlider label="Trigger coupling" max={1} value={1} />
                </div>
                <div className="flex justify-end gap-1">
                    <svg viewBox="0 0 8 28" className="mt-1 h-7 w-2"><path d="M0 12h4V1h4M0 16h4v11h4" fill="none" stroke="#444" strokeWidth="1.500" /></svg>
                    <VSlider label="Trigger edge" max={1} value={0} />
                </div>
            </div>
        </div>
        <div className="pr-px">
            <Toggle text="Auto" type="radio" group="mode" on />
            <Toggle text="One-Shot" type="radio" group="mode" />
            <Toggle text="Cursors" />
        </div>
        <div className="mt-auto pb-[2px] text-center">
            Source
            <SourceLetters />
            <HSlider label="Trigger source" />
        </div>
    </Panel>
);

const Horizontal = () => (
    <Panel title="Horizontal" titleClass="text-[#f07818]">
        <div className="pt-[2px] text-center">
            Source
            <SourceLetters ramp />
            <HSlider label="Horizontal source" wide />
            <div className="pt-[2px]">Position</div>
            <WheelH />
        </div>
        <Dial label="Time per division" labels={TIME_LABELS} units={['ms', 'µs']} color="#f07818" knob="up" value="5m" />
    </Panel>
);

const Oscilloscope = () => (
    <section className="absolute top-[39px] left-[1172px] w-[705px] border border-[#6b7579] bg-linear-to-b from-[#eafeff] to-[#e0f6fd] px-[5px] pb-[3px] shadow-[0_2px_10px_rgba(0,0,0,0.6)]">
        <div className="flex h-[23px] items-center justify-between pl-[2px] text-xs text-black">
            <h2>Digital Oscilloscope</h2>
            <CloseButton />
        </div>
        <div className="flex border border-[#3d4448] bg-[#e8e8f0] p-[2px]">
            <div className="w-[405px]">
                <Screen />
                <div className="flex h-[18px] items-center border-y border-black bg-[#ececec] px-1">
                    <button type="button" aria-label="Scroll left"><svg viewBox="0 0 4 8" className="h-2 w-1"><path d="M4 0v8L0 4z" fill="#333" /></svg></button>
                    <input
                        type="range"
                        aria-label="Time offset"
                        defaultValue={91}
                        className="mx-2 h-4 flex-1 appearance-none bg-transparent [&::-webkit-slider-thumb]:size-[14px] [&::-webkit-slider-thumb]:appearance-none [&::-webkit-slider-thumb]:border [&::-webkit-slider-thumb]:border-[#999] [&::-webkit-slider-thumb]:bg-linear-to-b [&::-webkit-slider-thumb]:from-[#f4f4f4] [&::-webkit-slider-thumb]:to-[#ccc]"
                    />
                    <button type="button" aria-label="Scroll right"><svg viewBox="0 0 4 8" className="h-2 w-1"><path d="M0 0v8l4-4z" fill="#333" /></svg></button>
                </div>
            </div>
            <div className="grid grid-cols-[repeat(3,94px)] font-['Liberation_Sans',Arial,sans-serif]">
                <Trigger />
                <Channel {...CHANNELS.A} />
                <Channel {...CHANNELS.C} />
                <Horizontal />
                <Channel {...CHANNELS.B} />
                <Channel {...CHANNELS.D} />
            </div>
        </div>
    </section>
);

const App = () => (
    <div className="relative flex h-screen flex-col overflow-hidden bg-[#dfe9f1] font-['Open_Sans','Segoe_UI',sans-serif]">
        <Header />
        <div className="flex min-h-0 flex-1 font-['Liberation_Sans',Arial,sans-serif]">
            <Sidebar />
            <Schematic />
        </div>
        <WatchWindow />
        <Oscilloscope />
    </div>
);

export default App;
